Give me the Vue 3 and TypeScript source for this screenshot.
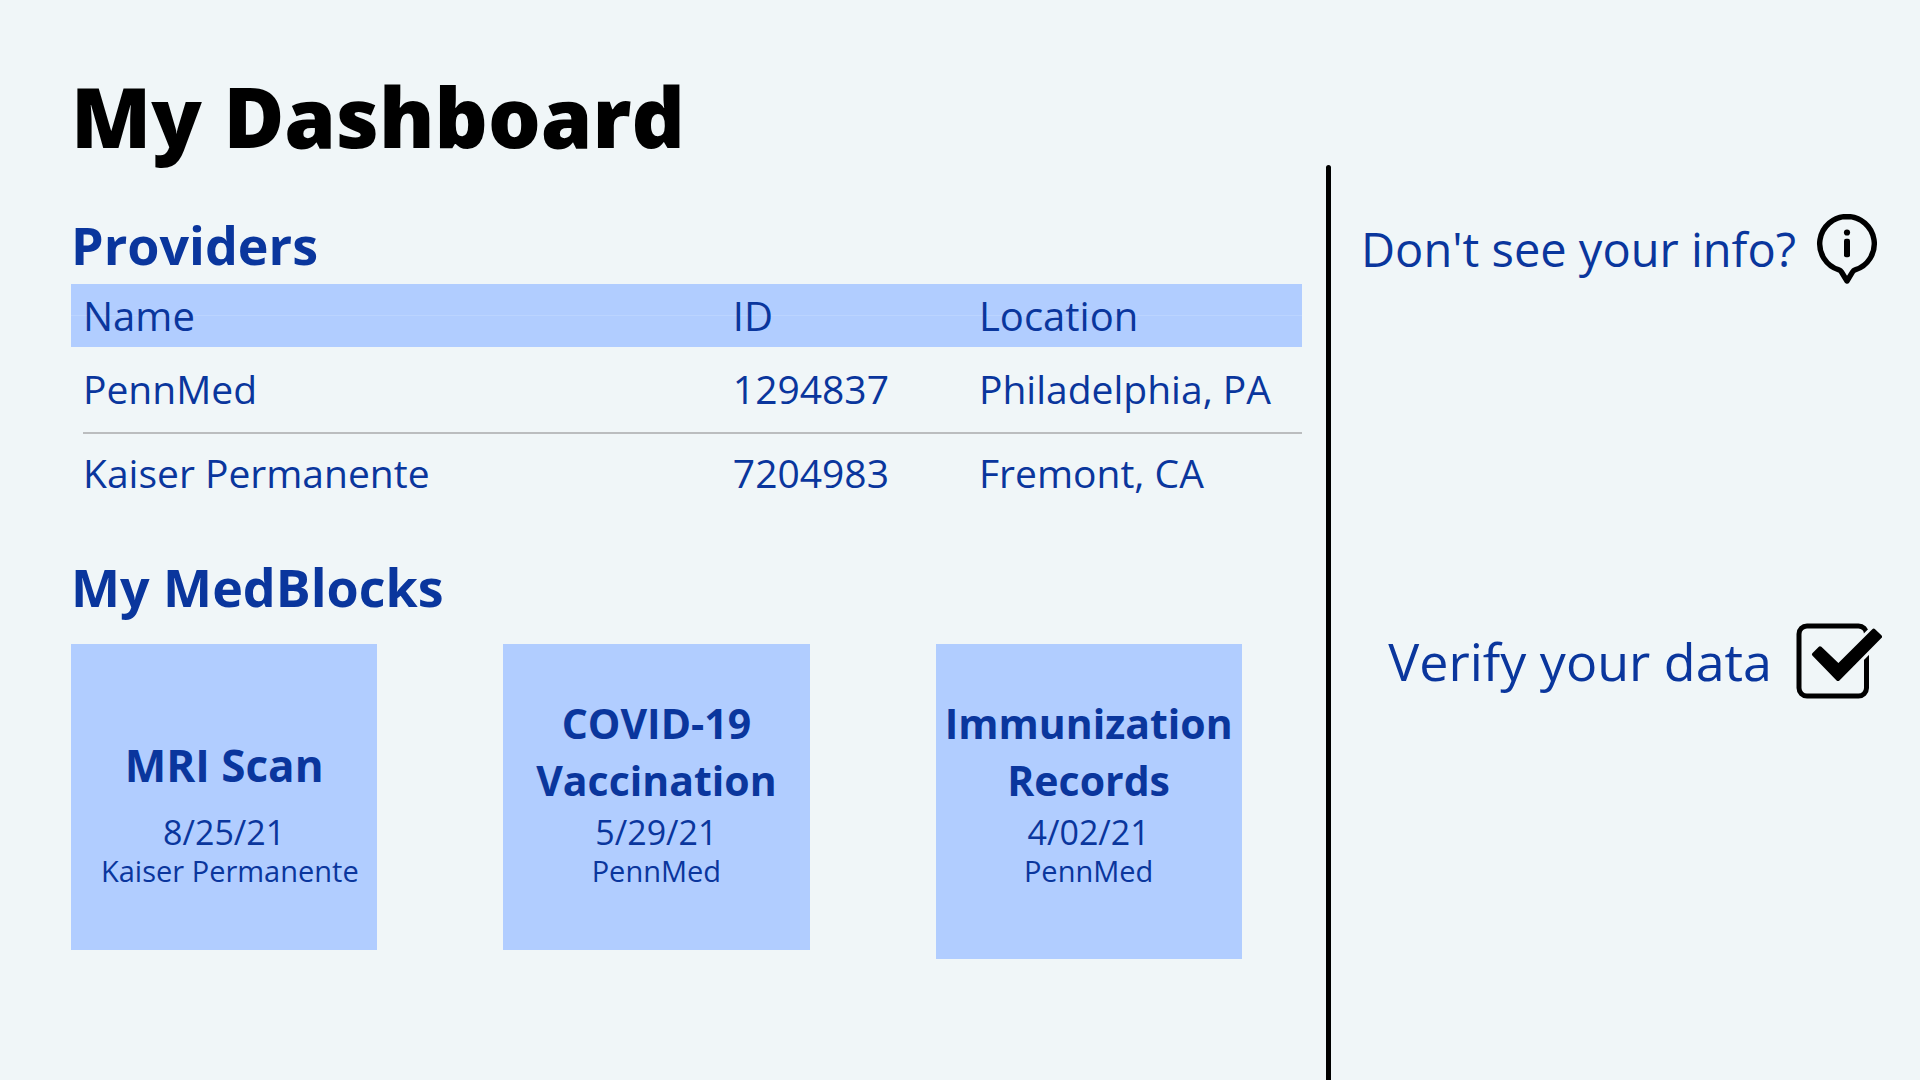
<script setup lang="ts">
interface Provider {
  name: string
  id: string
  location: string
}

interface MedBlock {
  title: string[]
  date: string
  provider: string
}

const providers: Provider[] = [
  { name: 'PennMed', id: '1294837', location: 'Philadelphia, PA' },
  { name: 'Kaiser Permanente', id: '7204983', location: 'Fremont, CA' },
]

const blocks: MedBlock[] = [
  { title: ['MRI Scan'], date: '8/25/21', provider: 'Kaiser Permanente' },
  { title: ['COVID-19', 'Vaccination'], date: '5/29/21', provider: 'PennMed' },
  { title: ['Immunization', 'Records'], date: '4/02/21', provider: 'PennMed' },
]
</script>

<template>
  <div class="page">
    <main class="main">
      <h1 class="page-title">My Dashboard</h1>

      <section class="providers">
        <h2 class="section-title">Providers</h2>
        <table class="table">
          <thead>
            <tr>
              <th scope="col" class="col-name">Name</th>
              <th scope="col" class="col-id">ID</th>
              <th scope="col">Location</th>
            </tr>
          </thead>
          <tbody>
            <tr v-for="p in providers" :key="p.id">
              <td>{{ p.name }}</td>
              <td>{{ p.id }}</td>
              <td>{{ p.location }}</td>
            </tr>
          </tbody>
        </table>
      </section>

      <section class="medblocks">
        <h2 class="section-title">My MedBlocks</h2>
        <div class="cards">
          <article v-for="b in blocks" :key="b.date" class="card">
            <h3 class="card-title" :class="{ single: b.title.length === 1 }">
              <span v-for="line in b.title" :key="line">{{ line }}</span>
            </h3>
            <p class="card-date">{{ b.date }}</p>
            <p class="card-provider">{{ b.provider }}</p>
          </article>
        </div>
      </section>
    </main>

    <div class="divider"></div>

    <aside class="side">
      <a class="action" href="#info">
        <span>Don't see your info?</span>
        <svg class="info-icon" viewBox="0 0 70 70" aria-hidden="true">
          <path
            d="M35 2.5 A27.3 27.3 0 0 1 43 55.9 Q41.5 56.3 40.5 58 L35 67 L29.5 58 Q28.5 56.3 27 55.9 A27.3 27.3 0 0 1 35 2.5 Z"
            fill="none"
            stroke="#000"
            stroke-width="5.4"
            stroke-linejoin="round"
          />
          <circle cx="35" cy="18.5" r="3.1" />
          <rect x="32" y="24.7" width="6" height="18.6" rx="2" />
        </svg>
      </a>
      <a class="action verify" href="#verify">
        <span>Verify your data</span>
        <svg class="check-icon" viewBox="0 0 86 76" aria-hidden="true">
          <rect x="3" y="3" width="67.5" height="70" rx="8" fill="none" stroke="#000" stroke-width="5" />
          <path
            d="M18 31.3 L24 25.3 L42.3 42.8 L77.7 7.7 L84 13.7 L42 56 Z"
            fill="#f0f6f8"
            stroke="#f0f6f8"
            stroke-width="10"
          />
          <path
            d="M18 31.3 L24 25.3 L42.3 42.8 L77.7 7.7 L84 13.7 L42 56 Z"
            stroke="#000"
            stroke-width="4"
            stroke-linejoin="round"
          />
        </svg>
      </a>
    </aside>
  </div>
</template>

<style>
body {
  margin: 0;
  background: #f0f6f8;
}
</style>

<style scoped>
.page {
  display: grid;
  grid-template-columns: minmax(0, 9fr) 5px minmax(0, 4fr);
  min-height: 100vh;
  font-family: "Open Sans", "Noto Sans", sans-serif;
  color: #0a369d;
}

.main {
  padding: 59px 24px 0 71px;
}

.page-title {
  margin: 0;
  font-size: 83px;
  font-weight: 800;
  line-height: 113px;
  color: #000;
}

.section-title {
  margin: 0;
  font-size: 52px;
  font-weight: 700;
  line-height: 71px;
}

.providers {
  margin-top: 37px;
}

.table {
  width: 100%;
  margin-top: 4px;
  border-collapse: collapse;
  table-layout: fixed;
  font-size: 39px;
  line-height: 53px;
  text-align: left;
  white-space: nowrap;
}

.col-name {
  width: 52.8%;
}

.col-id {
  width: 20%;
}

.table th {
  box-sizing: border-box;
  padding: 5px 12px;
  font-size: 40px;
  font-weight: 400;
}

.table thead tr {
  background: linear-gradient(#bbd4ff, #bbd4ff) 0 31px / 100% 1px no-repeat #b1cdff;
}

.table td {
  padding: 12px 12px 18px;
}

.table tbody tr:first-child td {
  padding: 15px 12px 19px;
  background: linear-gradient(#bbbdbf, #bbbdbf) 0 100% / 100% 2px no-repeat;
}

.table tbody tr:first-child td:first-child {
  background-position: 12px 100%;
}

.medblocks {
  margin-top: 34px;
}

.cards {
  display: grid;
  grid-template-columns: repeat(3, minmax(0, 1fr));
  align-items: start;
  gap: 126px;
  margin-top: 22px;
  padding-right: 60px;
}

.card {
  box-sizing: border-box;
  min-height: 306px;
  padding-top: 51px;
  background: #b1cdff;
  text-align: center;
  white-space: nowrap;
}

.card:last-child {
  min-height: 315px;
}

.card-title {
  display: flex;
  flex-direction: column;
  align-items: center;
  justify-content: flex-end;
  box-sizing: border-box;
  height: 114px;
  margin: 0 0 2px;
  font-size: 41px;
  font-weight: 700;
  line-height: 57px;
}

.card-title.single {
  padding-bottom: 15px;
  font-size: 44px;
}

.card-date {
  margin: 0;
  font-size: 34px;
  line-height: 42px;
}

.card-provider {
  margin: 0;
  padding: 0 30px;
  font-size: 29px;
  line-height: 36px;
}

.divider {
  margin-top: 165px;
  border-radius: 3px 3px 0 0;
  background: #000;
}

.side {
  padding: 214px 38px 0 0;
}

.action {
  display: flex;
  align-items: center;
  justify-content: flex-end;
  gap: 16px;
  font-size: 47px;
  line-height: 64px;
  color: inherit;
  text-decoration: none;
  white-space: nowrap;
}

.verify {
  margin-top: 339px;
  gap: 24px;
  font-size: 52px;
}

.info-icon {
  flex: none;
  width: 70px;
  height: 70px;
}

.check-icon {
  flex: none;
  width: 86px;
  height: 76px;
}
</style>
